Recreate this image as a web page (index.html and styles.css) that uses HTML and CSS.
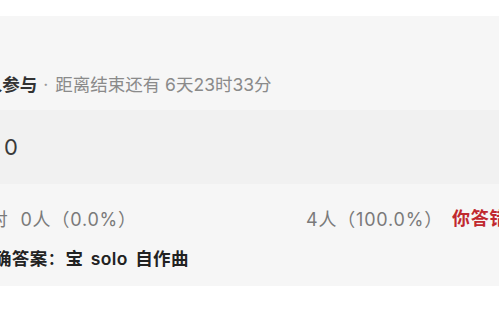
FILE: index.html
```html
<!DOCTYPE html>
<html lang="zh-CN">
<head>
<meta charset="utf-8">
<link rel="stylesheet" href="styles.css">
</head>
<body>
<div class="page">
  <div class="panel">
    <div class="meta">
      <span class="count">4人参与</span><span class="sep">·</span><span class="time">距离结束还有 6天23时33分</span>
    </div>
    <div class="option">
      <span class="option-num">0</span>
    </div>
    <div class="stats">
      <span class="stat-left">答对 0人<span class="cjk">（</span>0.0%<span class="cjk">）</span></span>
      <span class="stat-right">4人<span class="cjk">（</span>100.0%<span class="cjk">）</span></span>
      <span class="wrong">你答错了</span>
    </div>
    <div class="answer">正确答案<span class="cjk colon">：</span>宝 solo 自作曲</div>
  </div>
</div>
</body>
</html>
```

FILE: styles.css
```css
html, body {
  margin: 0;
  padding: 0;
  background: #ffffff;
}
body {
  width: 499px;
  height: 320px;
  overflow: hidden;
  font-family: "Inter", "Noto Sans CJK SC", sans-serif;
  text-spacing-trim: space-all;
}
.cjk {
  font-family: "Noto Sans CJK SC", sans-serif;
}
.page {
  padding-top: 16px;
}
.panel {
  background: #f6f6f6;
  padding: 57px 0 16px 0;
  margin-left: -24px;
  width: 800px;
}
.meta {
  font-size: 17.5px;
  line-height: 24px;
  height: 24px;
  white-space: nowrap;
  margin-bottom: 13px;
  margin-left: -3px;
}
.count {
  color: #333333;
  font-weight: 600;
}
.sep {
  color: #999999;
  margin: 0 7px 0 6px;
}
.time {
  color: #8a8a8a;
}
.option {
  background: #f1f1f1;
  height: 74px;
  display: flex;
  align-items: center;
  padding-left: 28px;
}
.option-num {
  font-size: 22px;
  color: #3a3a3a;
  line-height: 24px;
}
.stats {
  margin-top: 23px;
  display: flex;
  align-items: center;
  font-size: 18px;
  line-height: 24px;
  height: 24px;
  white-space: nowrap;
  color: #7a7a7a;
  letter-spacing: 0.8px;
}
.stat-left {
  width: 330px;
  flex: none;
  margin-left: -5px;
  padding-right: 5px;
  word-spacing: 6px;
}
.stat-right {
  flex: none;
}
.wrong {
  color: #c0282e;
  font-weight: 700;
  margin-left: 9px;
}
.answer {
  margin-top: 15px;
  font-size: 17.5px;
  line-height: 24px;
  height: 24px;
  color: #222222;
  font-weight: 600;
  white-space: nowrap;
  letter-spacing: 0.4px;
  word-spacing: 2.5px;
}
.colon {
  font-weight: 500;
}
```
